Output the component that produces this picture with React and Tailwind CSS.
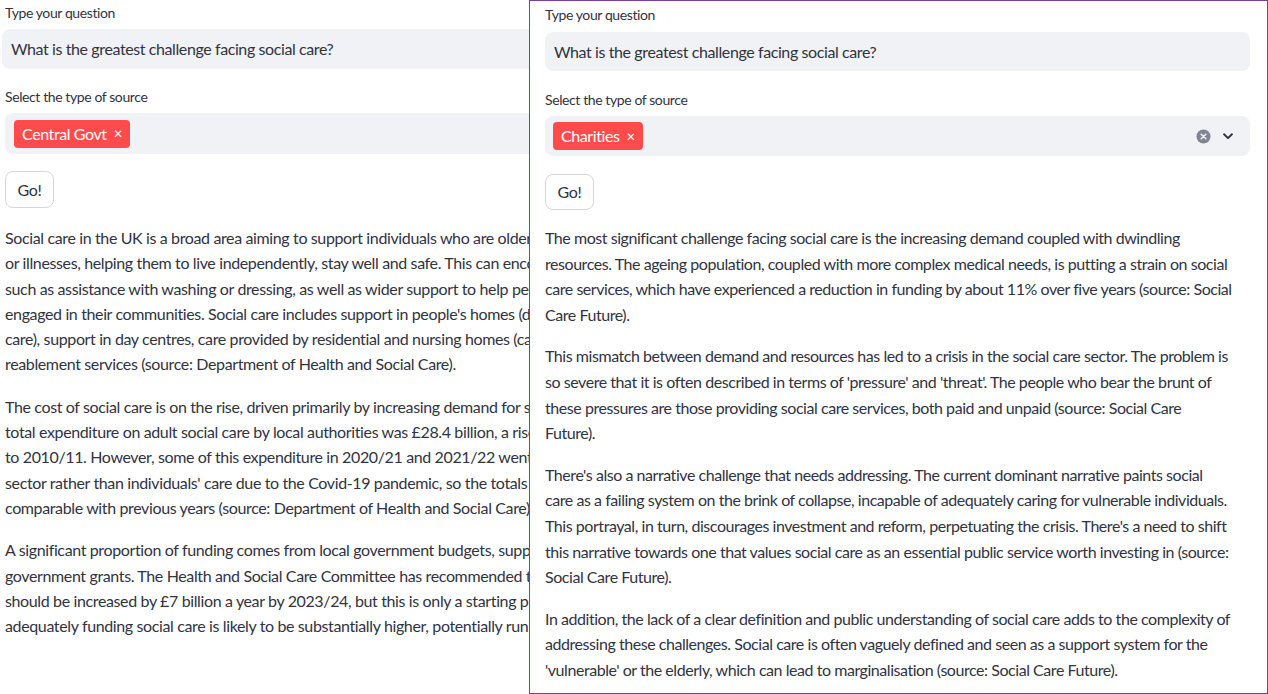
import React from "react";

const leftParas = [
  [
    "Social care in the UK is a broad area aiming to support individuals who are older, or who have disabilities",
    "or illnesses, helping them to live independently, stay well and safe. This can encompass personal care,",
    "such as assistance with washing or dressing, as well as wider support to help people stay active and",
    "engaged in their communities. Social care includes support in people's homes (domiciliary or home",
    "care), support in day centres, care provided by residential and nursing homes (care homes), and",
    "reablement services (source: Department of Health and Social Care).",
  ],
  [
    "The cost of social care is on the rise, driven primarily by increasing demand for services. In 2021/22,",
    "total expenditure on adult social care by local authorities was £28.4 billion, a rise in real terms compared",
    "to 2010/11. However, some of this expenditure in 2020/21 and 2021/22 went on supporting the care",
    "sector rather than individuals' care due to the Covid-19 pandemic, so the totals are not directly",
    "comparable with previous years (source: Department of Health and Social Care).",
  ],
  [
    "A significant proportion of funding comes from local government budgets, supplemented by central",
    "government grants. The Health and Social Care Committee has recommended that the social care budget",
    "should be increased by £7 billion a year by 2023/24, but this is only a starting point. The cost of",
    "adequately funding social care is likely to be substantially higher, potentially running to billions more.",
  ],
];

const rightParas = [
  [
    "The most significant challenge facing social care is the increasing demand coupled with dwindling",
    "resources. The ageing population, coupled with more complex medical needs, is putting a strain on social",
    "care services, which have experienced a reduction in funding by about 11% over five years (source: Social",
    "Care Future).",
  ],
  [
    "This mismatch between demand and resources has led to a crisis in the social care sector. The problem is",
    "so severe that it is often described in terms of 'pressure' and 'threat'. The people who bear the brunt of",
    "these pressures are those providing social care services, both paid and unpaid (source: Social Care",
    "Future).",
  ],
  [
    "There's also a narrative challenge that needs addressing. The current dominant narrative paints social",
    "care as a failing system on the brink of collapse, incapable of adequately caring for vulnerable individuals.",
    "This portrayal, in turn, discourages investment and reform, perpetuating the crisis. There's a need to shift",
    "this narrative towards one that values social care as an essential public service worth investing in (source:",
    "Social Care Future).",
  ],
  [
    "In addition, the lack of a clear definition and public understanding of social care adds to the complexity of",
    "addressing these challenges. Social care is often vaguely defined and seen as a support system for the",
    "'vulnerable' or the elderly, which can lead to marginalisation (source: Social Care Future).",
  ],
];

function Tag({ label }) {
  return (
    <span className="inline-flex items-center h-[28px] px-[8px] rounded-[4px] bg-[#ff4b4b] text-white text-[16px] leading-none">
      {label}
      <span className="ml-[7px] text-[15px]">×</span>
    </span>
  );
}

function Paragraphs({ paras, lineClass, gapClass }) {
  return (
    <div className={`flex flex-col ${gapClass}`}>
      {paras.map((lines, i) => (
        <div key={i}>
          {lines.map((l, j) => (
            <div key={j} className={`whitespace-nowrap ${lineClass}`}>
              {l}
            </div>
          ))}
        </div>
      ))}
    </div>
  );
}

export default function App() {
  return (
    <div
      className="relative w-[1268px] h-[694px] overflow-hidden bg-white text-[#31333f] tracking-[-0.4px]"
      style={{ fontFamily: "Lato, 'Liberation Sans', sans-serif" }}
    >
      {/* left window */}
      <div className="w-[780px] pt-[3px]">
        <div className="pl-[5px] text-[14px] leading-[20px]">Type your question</div>
        <div className="ml-[2px] mt-[6px] h-[40px] rounded-[8px] bg-[#f0f2f6] flex items-center pl-[9px] text-[16px]">
          What is the greatest challenge facing social care?
        </div>
        <div className="pl-[5px] mt-[18px] text-[14px] leading-[20px]">Select the type of source</div>
        <div className="ml-[5px] mt-[6px] h-[41px] rounded-[8px] bg-[#f0f2f6] flex items-center pl-[9px]">
          <Tag label="Central Govt" />
        </div>
        <button className="ml-[5px] mt-[17px] w-[49px] h-[37px] rounded-[8px] border border-[#d5d7dc] bg-white text-[16px]">
          Go!
        </button>
        <div className="pl-[5px] mt-[17px] text-[16px] tracking-[-0.37px]">
          <Paragraphs paras={leftParas} lineClass="leading-[25.3px]" gapClass="gap-[17px]" />
        </div>
      </div>

      {/* right window, lying over the left one */}
      <div className="absolute left-[529px] top-0 w-[739px] h-[694px] bg-white border border-[#7a3e9d] pl-[15px] pr-[17px] pt-[4px]">
        <div className="text-[14px] leading-[20px]">Type your question</div>
        <div className="mt-[7px] h-[39px] rounded-[8px] bg-[#f0f2f6] flex items-center pl-[9px] text-[16px]">
          What is the greatest challenge facing social care?
        </div>
        <div className="mt-[19px] text-[14px] leading-[20px]">Select the type of source</div>
        <div className="mt-[6px] h-[40px] rounded-[8px] bg-[#f0f2f6] flex items-center pl-[8px] pr-[15px]">
          <Tag label="Charities" />
          <div className="ml-auto flex items-center gap-[10px]">
            <svg width="15" height="15" viewBox="0 0 16 16">
              <circle cx="8" cy="8" r="7.5" fill="#808495" />
              <path d="M5.5 5.5l5 5M10.5 5.5l-5 5" stroke="#f0f2f6" strokeWidth="1.6" strokeLinecap="round" />
            </svg>
            <svg width="14" height="14" viewBox="0 0 16 16">
              <path d="M3.5 6l4.5 4.5L12.5 6" fill="none" stroke="#31333f" strokeWidth="2.2" strokeLinecap="round" strokeLinejoin="round" />
            </svg>
          </div>
        </div>
        <button className="mt-[18px] w-[49px] h-[36px] rounded-[8px] border border-[#d5d7dc] bg-white text-[16px]">
          Go!
        </button>
        <div className="mt-[15px] text-[16px] tracking-[-0.45px]">
          <Paragraphs paras={rightParas} lineClass="leading-[25.6px]" gapClass="gap-[16px]" />
        </div>
      </div>
    </div>
  );
}
